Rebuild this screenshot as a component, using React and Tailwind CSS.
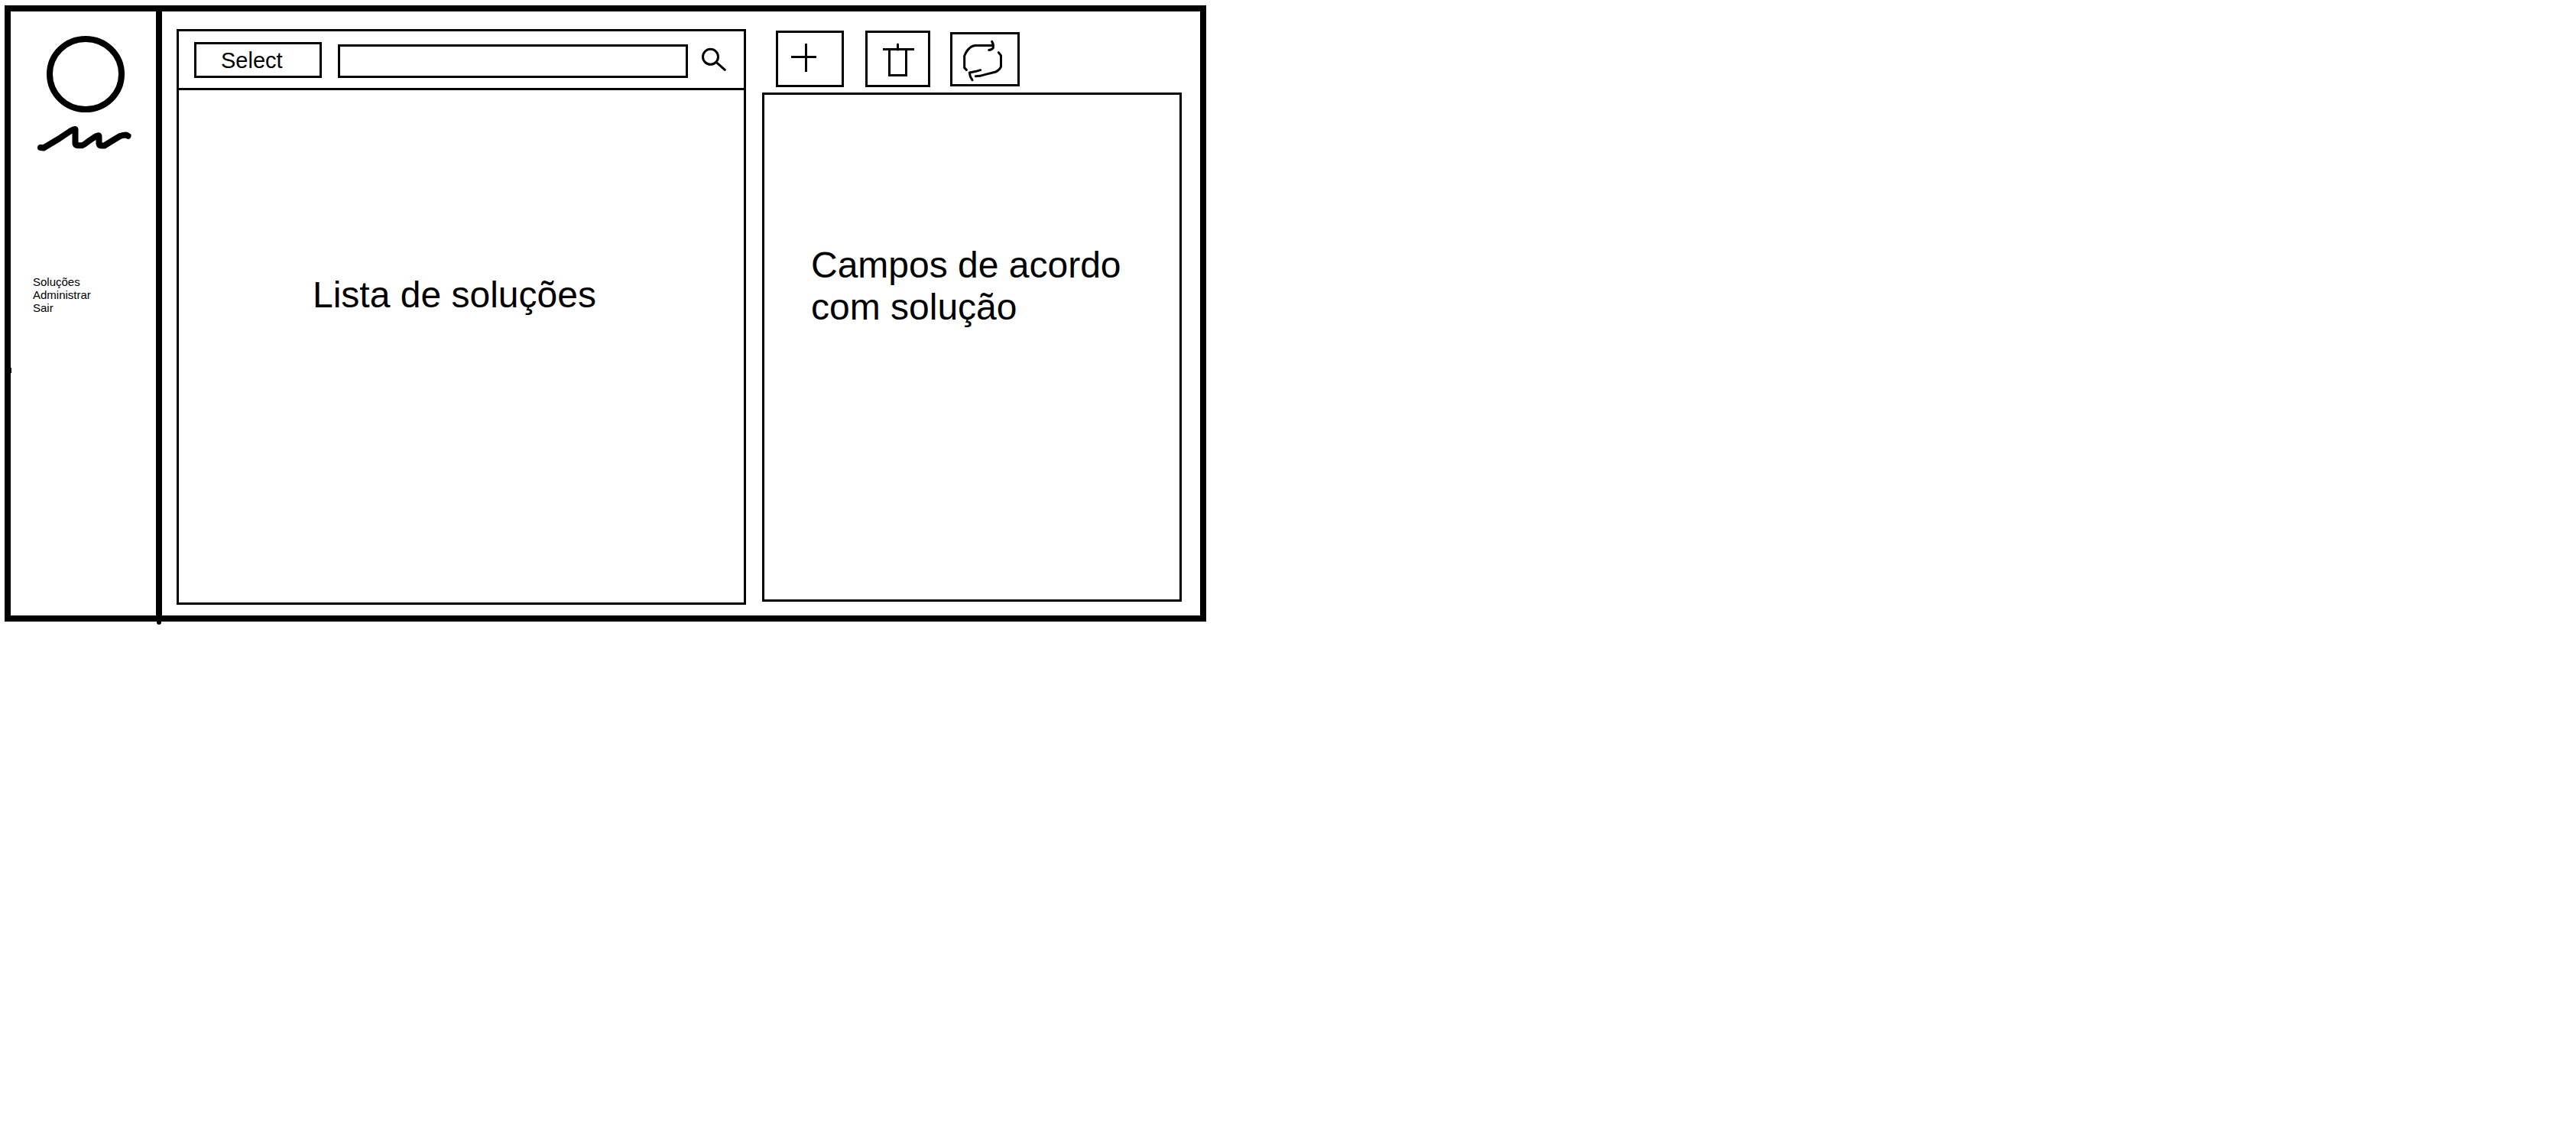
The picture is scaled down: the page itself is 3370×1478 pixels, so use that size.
function Logo() {
  return (
    <svg
      viewBox="0 0 136 158"
      className="h-[158px] w-[136px]"
      fill="none"
      stroke="black"
      strokeWidth="8"
      strokeLinecap="round"
      strokeLinejoin="round"
      role="img"
      aria-label="Logo"
    >
      <ellipse cx="69" cy="53" rx="47" ry="46" />
      <path d="M10 149 L14 149.500 L34 137.500 L49 127.500 Q54 124.500 55.500 125 L55.500 144 Q56 146 59 146.300 L64 146.300 Q67 145.500 73 140.500 L82 134.500 Q86 132.500 86.500 134 L86.500 144 Q87 146.500 89 146.500 L93.500 146.500 L104 140 L114 134 Q118 132.500 122 132.500 L124.500 133.800" />
    </svg>
  );
}

function Sidebar() {
  return (
    <aside className="relative w-[198px] shrink-0 border-r-8 border-black pl-[29px] pt-[29px]">
      <Logo />
      <nav className="mt-[158px] flex flex-col items-start text-[15px] leading-[17px]">
        <a href="#solucoes">Soluções</a>
        <a href="#administrar">Administrar</a>
        <a href="#sair">Sair</a>
      </nav>
      <span className="absolute left-0 top-[466px] h-[7px] w-px bg-black" />
      <span className="absolute -bottom-3 -right-[7px] h-1 w-1.5 rounded-b-sm bg-black" />
    </aside>
  );
}

function SolutionList() {
  return (
    <section className="flex min-h-[753px] flex-col border-[3px] border-black">
      <form className="flex h-[77px] shrink-0 items-end border-b-[3px] border-black pb-[13px] pl-5 pr-[23px]">
        <select
          aria-label="Select"
          className="h-[47px] w-[167px] shrink-0 appearance-none rounded-none border-[3px] border-black bg-white pl-8 pt-0.5 text-[29px] leading-[39px] text-black outline-none"
        >
          <option>Select</option>
        </select>
        <input
          type="text"
          aria-label="Pesquisar soluções"
          className="ml-[21px] h-11 min-w-0 flex-1 rounded-none border-[3px] border-black bg-white px-2 text-2xl outline-none"
        />
        <button type="button" aria-label="Pesquisar" className="mb-2 ml-[18px] h-8 w-8 shrink-0">
          <svg viewBox="174 124 96 96" className="h-8 w-8" fill="none" stroke="black" strokeWidth="9" strokeLinecap="round">
            <circle cx="208.500" cy="161" r="30" />
            <path d="M231 182 L265 212" />
          </svg>
        </button>
      </form>
      <h2 className="pl-[175px] pt-60 text-5xl leading-[55px]">Lista de soluções</h2>
    </section>
  );
}

function Toolbar() {
  return (
    <div className="flex h-[83px] shrink-0 items-start pl-[18px] pt-0.5">
      <button type="button" aria-label="Adicionar" className="h-[74px] w-[89px] border-[3px] border-black">
        <svg viewBox="0 0 83 68" className="h-full w-full" fill="none" stroke="black" strokeWidth="3">
          <path d="M36.500 14 V51 M17 31.500 H50" />
        </svg>
      </button>
      <button type="button" aria-label="Excluir" className="ml-7 h-[74px] w-[85px] border-[3px] border-black">
        <svg viewBox="0 0 79 68" className="h-full w-full" fill="none" stroke="black" strokeWidth="3">
          <path d="M20 21.500 H61 M28.500 21.500 V55.500 H50.500 V21.500" />
          <path d="M39.500 15 V22" strokeLinecap="round" />
        </svg>
      </button>
      <button type="button" aria-label="Atualizar" className="ml-[26px] mt-0.5 h-[71px] w-[91px] border-[3px] border-black">
        <svg
          viewBox="498 75 255 195"
          className="h-full w-full"
          fill="none"
          stroke="black"
          strokeWidth="9"
          strokeLinecap="round"
          strokeLinejoin="round"
        >
          <path d="M553 214 L545 206 V160 Q552 140 565 129 Q576 119 588 118.500 H656" />
          <path d="M653 103 Q660 114 658 128 Q652 136 641 136.500" />
          <path d="M679 146 L688.500 158 V202 Q682 216 668 222 L625 233 L606 238 L589 239" />
          <path d="M608 215 L590 220 L565 225 L568 240 L576 254" />
        </svg>
      </button>
    </div>
  );
}

function SolutionFields() {
  return (
    <section className="flex flex-col pb-1">
      <Toolbar />
      <div className="flex-1 border-[3px] border-black pl-[61px] pr-4 pt-[195px]">
        <h2 className="text-5xl leading-[55px]">Campos de acordo com solução</h2>
      </div>
    </section>
  );
}

export default function App() {
  return (
    <div className="min-h-screen bg-white pl-1.5 pt-[7px] font-['Liberation_Sans',Arial,sans-serif] text-black">
      <div className="flex w-full max-w-[1572px] border-8 border-black">
        <Sidebar />
        <main className="grid min-w-0 flex-1 grid-cols-[745fr_549fr] gap-[21px] pb-3.5 pl-[19px] pr-6 pt-[23px]">
          <SolutionList />
          <SolutionFields />
        </main>
      </div>
    </div>
  );
}
